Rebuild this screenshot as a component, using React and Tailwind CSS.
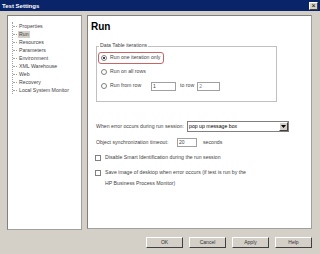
import React from "react";

const Radio = ({ checked }) => (
  <span className="w-[6px] h-[6px] rounded-full border border-[#808080] bg-white flex items-center justify-center shrink-0">
    {checked && <span className="w-[2px] h-[2px] rounded-full bg-black" />}
  </span>
);

const Check = () => (
  <span className="w-[6px] h-[6px] border border-[#808080] bg-white shrink-0" />
);

const Input = ({ w, value, disabled }) => (
  <span
    className={`h-[9px] border border-[#a0a0a0] flex items-center px-[1px] text-[5px] leading-none shrink-0 ${w} ${
      disabled ? "bg-white text-[#808080]" : "bg-white"
    }`}
  >
    {value}
  </span>
);

const Btn = ({ children }) => (
  <div className="w-[37px] h-[11px] bg-[#d4d0c8] border border-t-white border-l-white border-r-[#404040] border-b-[#404040] flex items-center justify-center text-[5px] text-[#333]">
    {children}
  </div>
);

export default function App() {
  const items = [
    "Properties",
    "Run",
    "Resources",
    "Parameters",
    "Environment",
    "XML Warehouse",
    "Web",
    "Recovery",
    "Local System Monitor",
  ];
  const t = "text-[5.2px] leading-none whitespace-nowrap";
  return (
    <div
      className="w-[320px] h-[254px] bg-[#d4d0c8] flex flex-col overflow-hidden text-[#444]"
      style={{ fontFamily: '"Liberation Sans", Arial, sans-serif' }}
    >
      <div className="h-[11px] bg-[#0a246a] flex items-center justify-between pl-[2px] pr-[2px]">
        <span className="text-white font-bold text-[6px] leading-none">Test Settings</span>
        <span className="w-[9px] h-[8px] bg-[#d4d0c8] border border-t-white border-l-white border-r-[#404040] border-b-[#404040] flex items-center justify-center text-[7px] leading-none text-black">
          ×
        </span>
      </div>
      <div className="flex gap-[5px] pl-[7px] pt-[4px]">
        <div className="w-[75px] h-[215px] bg-white border border-t-[#808080] border-l-[#808080] border-r-[#a0a0a0] border-b-[#a0a0a0] pt-[6px]">
          <div className="ml-[4px] border-l border-dotted border-[#a0a0a0] flex flex-col">
            {items.map((s, i) => (
              <div key={s} className="flex items-center h-[8px]">
                <span className="w-[4px] border-t border-dotted border-[#a0a0a0]" />
                <span
                  className={`ml-[1px] px-[1px] text-[5.2px] leading-[7px] whitespace-nowrap ${
                    i === 1 ? "bg-[#d4d0c8]" : ""
                  }`}
                >
                  {s}
                </span>
              </div>
            ))}
          </div>
        </div>
        <div className="w-[225px] h-[214px] bg-white border border-t-[#808080] border-l-[#808080] border-r-[#a0a0a0] border-b-[#a0a0a0] flex flex-col pl-[3px]">
          <div className="font-bold text-[10px] leading-none text-black mt-[6px]">Run</div>
          <div className="ml-[5px] mt-[14px] w-[181px] h-[56px] border border-[#c0c0c0] relative pt-[5px] pl-[1px]">
            <span className={`absolute -top-[4px] left-[2px] bg-white px-[1px] ${t} leading-[7px]`}>
              Data Table iterations
            </span>
            <div className="w-[66px] h-[12px] border border-[#c86464] rounded-[3px] flex items-center gap-[3px] pl-[2px]">
              <Radio checked />
              <span className={t}>Run one iteration only</span>
            </div>
            <div className="h-[14px] flex items-center gap-[3px] pl-[3px] mt-[1px]">
              <Radio />
              <span className={t}>Run on all rows</span>
            </div>
            <div className="h-[14px] flex items-center gap-[3px] pl-[3px]">
              <Radio />
              <span className={`${t} w-[38px]`}>Run from row</span>
              <Input w="w-[25px]" value="1" />
              <span className={`${t} ml-[1px]`}>to row</span>
              <Input w="w-[23px]" value="2" disabled />
            </div>
          </div>
          <div className="flex items-center mt-[19px] ml-[5px]">
            <span className={`${t} w-[91px]`}>When error occurs during run session:</span>
            <div className="w-[102px] h-[11px] border border-[#808080] flex items-center">
              <span className={`flex-1 ${t} pl-[1px] text-black`}>pop up message box</span>
              <span className="w-[9px] h-[9px] bg-[#d4d0c8] border border-t-white border-l-white border-r-[#404040] border-b-[#404040] flex items-center justify-center">
                <svg width="5" height="3" viewBox="0 0 5 3"><path d="M0 0h5L2.5 3z" fill="#000" /></svg>
              </span>
            </div>
          </div>
          <div className="flex items-center mt-[6px] ml-[5px]">
            <span className={`${t} w-[81px]`}>Object synchronization timeout:</span>
            <Input w="w-[20px]" value="20" />
            <span className={`${t} ml-[6px]`}>seconds</span>
          </div>
          <div className="flex items-center mt-[8px] ml-[4px] gap-[4px]">
            <Check />
            <span className={t}>Disable Smart Identification during the run session</span>
          </div>
          <div className="flex items-start mt-[9px] ml-[4px] gap-[4px]">
            <Check />
            <span className="text-[5.2px] leading-[11px] -mt-[3px] whitespace-nowrap">
              Save image of desktop when error occurs (if test is run by the
              <br />
              HP Business Process Monitor)
            </span>
          </div>
        </div>
      </div>
      <div className="flex gap-[6px] justify-end pr-[8px] mt-[7px]">
        <Btn>OK</Btn>
        <Btn>Cancel</Btn>
        <Btn>Apply</Btn>
        <Btn>Help</Btn>
      </div>
    </div>
  );
}
